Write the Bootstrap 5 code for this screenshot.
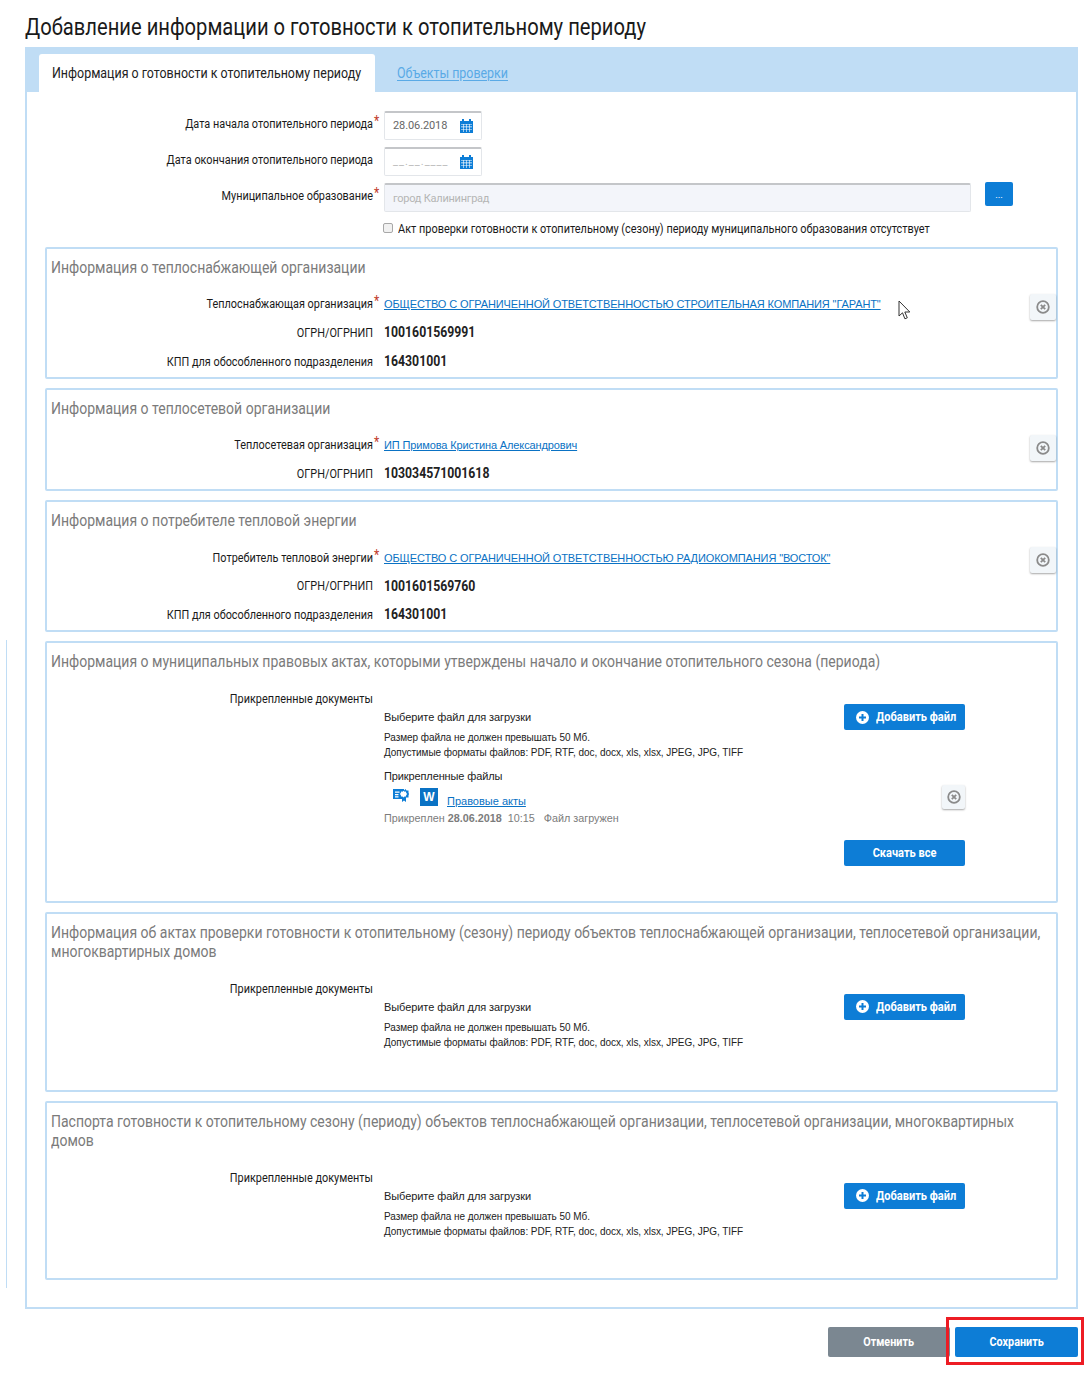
<!doctype html>
<html lang="ru">
<head>
<meta charset="utf-8">
<title>Добавление информации</title>
<link href="https://cdn.jsdelivr.net/npm/bootstrap@5.3.0/dist/css/bootstrap.min.css" rel="stylesheet">
<style>
body{background:#fff;color:#1a1a1a;font-family:"Liberation Sans",sans-serif;position:relative;height:1390px;overflow:hidden}
.page-wrap{width:1053px;margin-left:25px}
.page-title{font:400 23px/26px Roboto,sans-serif;margin:15px 0 6px;color:#1a1a1a;white-space:nowrap;transform:scaleX(.877);transform-origin:0 50%}
.outer-box{border:2px solid #c0ddf5;border-top:0;height:1262px}
.tab-strip{background:#c0ddf5;height:45px;margin:0 -2px;padding:7px 0 0 14px;align-items:stretch}
.tab-on{background:#fff;width:336px;border-radius:3px 3px 0 0;color:#222;white-space:nowrap;padding-left:13px;overflow:hidden}
.tab-text{display:inline-block;font:14px/38px Roboto,sans-serif;transform:scaleX(.888);transform-origin:0 50%;white-space:nowrap}
.tab-off{margin-left:22px;color:#5aaae6;text-decoration:underline;text-underline-offset:2px}
.form-body{padding:15px 18px 0 18px}
.field-row{height:36px;align-items:center}
.lab{flex:0 0 auto;width:339px;padding-right:4.6px;text-align:right;font:12.5px/18px Roboto,sans-serif;color:#1a1a1a;white-space:nowrap;transform:scaleX(.87);transform-origin:100% 50%}
.field-row .lab{margin-top:-2px}
.star{display:inline-block;width:8px;color:#c0392b;font-size:14px;line-height:12px;text-align:center;vertical-align:2px}
.star-off{visibility:hidden}
.date-box{width:98px;height:29px;border:1px solid #e3e6ea;border-top:2px solid #c4c6c9;border-radius:2px;padding:1px 8px 0 8px;font:11px/26px Roboto,sans-serif;color:#666;letter-spacing:-.1px}
.date-blank{color:#bbb;letter-spacing:1px}
.muni-box{width:587px;height:29px;background:#f3f5fa;border:1px solid #e3e6ea;border-top:2px solid #c4c6c9;border-radius:2px;padding:0 8px;font:11px/28px Roboto,sans-serif;color:#b5b5b5;letter-spacing:-.25px}
.dots-btn{width:28px;height:24px;background:#0d7dd6;border:0;border-radius:2px;color:#fff;font-size:9px;line-height:26px;padding:0;margin-left:14px;margin-top:-6px}
.chk-row{height:26px;margin-left:338px;margin-top:2px;align-items:center;white-space:nowrap}
.chk-text{display:inline-block;font:12.5px/18px Roboto,sans-serif;transform:scaleX(.874);transform-origin:0 50%;margin-top:-3px}
.chk-box{margin:0 5px 4px 0;width:10px;height:10px;border:1px solid #a8a8a8;border-radius:2px;background:#f1f1f1;flex:none}
.info-box{border:2px solid #c0ddf5;border-radius:2px;margin-bottom:9px;position:relative;padding:10px 0 1px 4px}
.info-first{margin-top:4px}
.info-title{font:400 16px/18.5px Roboto,sans-serif;color:#7b7b7b;margin:0 0 12.5px;width:calc((100% - 10px)/.875);transform:scaleX(.875);transform-origin:0 50%}
.pair-row{height:28.67px;align-items:center}
.pair-row .lab{width:333px}
.val{font:700 14px/18px Roboto,sans-serif;color:#222;transform:scaleX(.875);transform-origin:0 50%;margin-top:-1px}
.org-link{font:11px/18px "Liberation Sans",Arial,sans-serif;letter-spacing:-.12px;color:#0a72c4;text-decoration:underline;white-space:nowrap}
.x-btn{width:26px;height:26px;background:#f2f6f9;border-radius:2px;box-shadow:0 1px 2px rgba(0,0,0,.35);align-items:center;justify-content:center;padding:0;border:0;flex:none}
.pair-row .x-btn{margin-left:auto;margin-top:5px}
.doc-row{margin-top:18.5px}
.doc-row .lab{width:333px}
.doc-main{width:581px;padding-top:14px}
.head-line{justify-content:space-between;align-items:flex-start}
.pick-title{font:11px/18px "Liberation Sans",Arial,sans-serif;letter-spacing:-.08px;margin-top:4px;color:#222}
.pick-note{font:10px/15px "Liberation Sans",Arial,sans-serif;letter-spacing:-.05px;color:#222;margin-top:4px}
.act-btn{width:121px;height:26px;background:#0d7dd6;border:0;border-radius:2px;color:#fff;padding:0 0 0 12px;align-items:center;justify-content:flex-start;gap:7px;flex:none;overflow:hidden}
.act-btn svg{flex:none}
.act-text{display:inline-block;font:700 13px/26px Roboto,sans-serif;color:#fff;white-space:nowrap;transform:scaleX(.85);transform-origin:0 50%}
.act-center{padding:0;justify-content:center}
.act-center .act-text{transform-origin:50% 50%}
.att-title{font:11px/18px "Liberation Sans",Arial,sans-serif;letter-spacing:-.12px;color:#222;margin-top:7px}
.att-line{height:24px;align-items:center;padding-left:9px}
.cert-mark{flex:none;margin-top:-3px}
.w-tile{width:18px;height:18px;background:#0a72c4;color:#fff;font:700 12px/18px "Liberation Sans",sans-serif;text-align:center;margin-left:11px;flex:none}
.file-link{margin-left:9px;font:11px/18px "Liberation Sans",Arial,sans-serif;color:#0a72c4;text-decoration:underline;margin-top:8px}
.att-line .x-btn{margin-left:auto;width:23px;height:24px}
.att-meta{font:10.8px/14px "Liberation Sans",Arial,sans-serif;color:#7c7c7c;margin-top:2px}
.dl-line{justify-content:flex-end;margin-top:15px}
.pad-dl{padding-bottom:35px}
.pad-end{padding-bottom:40.5px}
.pad-last{padding-bottom:39.5px}
.foot-row{justify-content:flex-end;gap:5px;margin-top:18px;position:relative}
.foot-btn{width:122px;height:30px;border:0;border-radius:2px;color:#fff;padding:0}
.foot-text{display:inline-block;font:700 13px/30px Roboto,sans-serif;color:#fff;transform:scaleX(.83);white-space:nowrap}
.foot-gray{background:#7b8791}
.foot-blue{background:#0d7dd6;width:123px}
.red-frame{position:absolute;left:921px;top:-10px;width:138px;height:48px;border:3px solid #ed1c24;pointer-events:none}
.cursor-mark{position:absolute;left:851px;top:51px}
.side-rule{position:absolute;left:6px;top:640px;width:1px;height:648px;background:#c0ddf5}
</style>
</head>
<body>
<div class="side-rule"></div>
<div class="page-wrap">
  <h1 class="page-title">Добавление информации о готовности к отопительному периоду</h1>
  <div class="outer-box">
    <div class="tab-strip d-flex">
      <div class="tab-on"><span class="tab-text">Информация о готовности к отопительному периоду</span></div>
      <a class="tab-text tab-off" href="#">Объекты проверки</a>
    </div>
    <div class="form-body">
      <div class="field-row d-flex">
        <div class="lab">Дата начала отопительного периода<span class="star">*</span></div>
        <div class="date-box d-flex justify-content-between align-items-center"><span>28.06.2018</span>
          <svg width="13" height="14" viewBox="0 0 13 14"><path fill="#0d7dd6" d="M0 2h2V0h2v2h5V0h2v2h2v12H0z"/><path fill="#fff" d="M1 5h11v.6H1zM1 7.6h11v.6H1zM1 10.2h11v.6H1zM3.4 5.6H4V13h-.6zM6.2 5.6h.6V13h-.6zM9 5.6h.6V13H9z"/></svg></div>
      </div>
      <div class="field-row d-flex">
        <div class="lab">Дата окончания отопительного периода<span class="star star-off">*</span></div>
        <div class="date-box d-flex justify-content-between align-items-center"><span class="date-blank">__.__.____</span>
          <svg width="13" height="14" viewBox="0 0 13 14"><path fill="#0d7dd6" d="M0 2h2V0h2v2h5V0h2v2h2v12H0z"/><path fill="#fff" d="M1 5h11v.6H1zM1 7.6h11v.6H1zM1 10.2h11v.6H1zM3.4 5.6H4V13h-.6zM6.2 5.6h.6V13h-.6zM9 5.6h.6V13H9z"/></svg></div>
      </div>
      <div class="field-row d-flex">
        <div class="lab">Муниципальное образование<span class="star">*</span></div>
        <div class="muni-box">город Калининград</div>
        <button class="btn dots-btn" type="button">...</button>
      </div>
      <div class="chk-row d-flex"><span class="chk-box"></span><span class="chk-text">Акт проверки готовности к отопительному (сезону) периоду муниципального образования отсутствует</span></div>

      <div class="info-box info-first">
        <h2 class="info-title">Информация о теплоснабжающей организации</h2>
        <div class="pair-row d-flex">
          <div class="lab">Теплоснабжающая организация<span class="star">*</span></div>
          <a class="org-link" href="#">ОБЩЕСТВО С ОГРАНИЧЕННОЙ ОТВЕТСТВЕННОСТЬЮ СТРОИТЕЛЬНАЯ КОМПАНИЯ "ГАРАНТ"</a>
          <button class="x-btn d-flex" type="button"><svg width="14" height="14" viewBox="0 0 14 14"><circle cx="7" cy="7" r="5.8" fill="none" stroke="#8b8b8b" stroke-width="1.8"/><path d="M4.8 4.8l4.4 4.4M9.2 4.8l-4.4 4.4" stroke="#8b8b8b" stroke-width="1.8"/></svg></button>
        </div>
        <div class="pair-row d-flex"><div class="lab">ОГРН/ОГРНИП<span class="star star-off">*</span></div><span class="val">1001601569991</span></div>
        <div class="pair-row d-flex"><div class="lab">КПП для обособленного подразделения<span class="star star-off">*</span></div><span class="val">164301001</span></div>
        <svg class="cursor-mark" width="13" height="20" viewBox="0 0 13 20"><path d="M1 1v15l3.5-3.2 2.4 6 2.4-1-2.5-5.8h5z" fill="#fff" stroke="#333" stroke-width="1"/></svg>
      </div>

      <div class="info-box">
        <h2 class="info-title">Информация о теплосетевой организации</h2>
        <div class="pair-row d-flex">
          <div class="lab">Теплосетевая организация<span class="star">*</span></div>
          <a class="org-link" href="#">ИП Примова Кристина Александрович</a>
          <button class="x-btn d-flex" type="button"><svg width="14" height="14" viewBox="0 0 14 14"><circle cx="7" cy="7" r="5.8" fill="none" stroke="#8b8b8b" stroke-width="1.8"/><path d="M4.8 4.8l4.4 4.4M9.2 4.8l-4.4 4.4" stroke="#8b8b8b" stroke-width="1.8"/></svg></button>
        </div>
        <div class="pair-row d-flex"><div class="lab">ОГРН/ОГРНИП<span class="star star-off">*</span></div><span class="val">103034571001618</span></div>
      </div>

      <div class="info-box">
        <h2 class="info-title">Информация о потребителе тепловой энергии</h2>
        <div class="pair-row d-flex">
          <div class="lab">Потребитель тепловой энергии<span class="star">*</span></div>
          <a class="org-link" href="#">ОБЩЕСТВО С ОГРАНИЧЕННОЙ ОТВЕТСТВЕННОСТЬЮ РАДИОКОМПАНИЯ "ВОСТОК"</a>
          <button class="x-btn d-flex" type="button"><svg width="14" height="14" viewBox="0 0 14 14"><circle cx="7" cy="7" r="5.8" fill="none" stroke="#8b8b8b" stroke-width="1.8"/><path d="M4.8 4.8l4.4 4.4M9.2 4.8l-4.4 4.4" stroke="#8b8b8b" stroke-width="1.8"/></svg></button>
        </div>
        <div class="pair-row d-flex"><div class="lab">ОГРН/ОГРНИП<span class="star star-off">*</span></div><span class="val">1001601569760</span></div>
        <div class="pair-row d-flex"><div class="lab">КПП для обособленного подразделения<span class="star star-off">*</span></div><span class="val">164301001</span></div>
      </div>

      <div class="info-box pad-dl">
        <h2 class="info-title">Информация о муниципальных правовых актах, которыми утверждены начало и окончание отопительного сезона (периода)</h2>
        <div class="doc-row d-flex">
          <div class="lab">Прикрепленные документы<span class="star star-off">*</span></div>
          <div class="doc-main">
            <div class="head-line d-flex">
              <div><div class="pick-title">Выберите файл для загрузки</div><div class="pick-note">Размер файла не должен превышать 50 Мб.<br>Допустимые форматы файлов: PDF, RTF, doc, docx, xls, xlsx, JPEG, JPG, TIFF</div></div>
              <button class="btn act-btn d-flex" type="button"><svg width="13" height="13" viewBox="0 0 13 13"><circle cx="6.5" cy="6.5" r="6.5" fill="#fff"/><path d="M6.5 3v7M3 6.5h7" stroke="#0d7dd6" stroke-width="2"/></svg><span class="act-text">Добавить файл</span></button>
            </div>
            <div class="att-title">Прикрепленные файлы</div>
            <div class="att-line d-flex">
              <svg class="cert-mark" width="16" height="16" viewBox="0 0 16 16"><path fill="#0d7dd6" d="M0 1h11v1.5L12.5 1l1 1.5h2v2l.5 1.5-.5 1.5v2h-2.5v4.500l-2-1.500-2 1.500V11H0z"/><path fill="#fff" d="M2 3.500h4.500v1.200H2zM2 6h3.500v1.200H2zM2 8.300h3.500v1.200H2zM10.500 2.800l1 1 1.500-.2.200 1.500 1 1-1 1-.2 1.500-1.500-.2-1 1-1-1-1.500.2-.2-1.500-1-1 1-1 .2-1.500 1.500.2z"/></svg>
              <span class="w-tile">W</span><a class="file-link" href="#">Правовые акты</a>
              <button class="x-btn d-flex" type="button"><svg width="14" height="14" viewBox="0 0 14 14"><circle cx="7" cy="7" r="5.8" fill="none" stroke="#8b8b8b" stroke-width="1.8"/><path d="M4.8 4.8l4.4 4.4M9.2 4.8l-4.4 4.4" stroke="#8b8b8b" stroke-width="1.8"/></svg></button>
            </div>
            <div class="att-meta">Прикреплен <b>28.06.2018</b>&nbsp; 10:15 &nbsp; Файл загружен</div>
            <div class="dl-line d-flex"><button class="btn act-btn act-center d-flex" type="button"><span class="act-text">Скачать все</span></button></div>
          </div>
        </div>
      </div>

      <div class="info-box pad-end">
        <h2 class="info-title">Информация об актах проверки готовности к отопительному (сезону) периоду объектов теплоснабжающей организации, теплосетевой организации, многоквартирных домов</h2>
        <div class="doc-row d-flex">
          <div class="lab">Прикрепленные документы<span class="star star-off">*</span></div>
          <div class="doc-main">
            <div class="head-line d-flex">
              <div><div class="pick-title">Выберите файл для загрузки</div><div class="pick-note">Размер файла не должен превышать 50 Мб.<br>Допустимые форматы файлов: PDF, RTF, doc, docx, xls, xlsx, JPEG, JPG, TIFF</div></div>
              <button class="btn act-btn d-flex" type="button"><svg width="13" height="13" viewBox="0 0 13 13"><circle cx="6.5" cy="6.5" r="6.5" fill="#fff"/><path d="M6.5 3v7M3 6.5h7" stroke="#0d7dd6" stroke-width="2"/></svg><span class="act-text">Добавить файл</span></button>
            </div>
          </div>
        </div>
      </div>

      <div class="info-box pad-last">
        <h2 class="info-title">Паспорта готовности к отопительному сезону (периоду) объектов теплоснабжающей организации, теплосетевой организации, многоквартирных домов</h2>
        <div class="doc-row d-flex">
          <div class="lab">Прикрепленные документы<span class="star star-off">*</span></div>
          <div class="doc-main">
            <div class="head-line d-flex">
              <div><div class="pick-title">Выберите файл для загрузки</div><div class="pick-note">Размер файла не должен превышать 50 Мб.<br>Допустимые форматы файлов: PDF, RTF, doc, docx, xls, xlsx, JPEG, JPG, TIFF</div></div>
              <button class="btn act-btn d-flex" type="button"><svg width="13" height="13" viewBox="0 0 13 13"><circle cx="6.5" cy="6.5" r="6.5" fill="#fff"/><path d="M6.5 3v7M3 6.5h7" stroke="#0d7dd6" stroke-width="2"/></svg><span class="act-text">Добавить файл</span></button>
            </div>
          </div>
        </div>
      </div>
    </div>
  </div>
  <div class="foot-row d-flex">
    <button class="btn foot-btn foot-gray" type="button"><span class="foot-text">Отменить</span></button>
    <button class="btn foot-btn foot-blue" type="button"><span class="foot-text">Сохранить</span></button>
    <div class="red-frame"></div>
  </div>
</div>
<script src="https://cdn.jsdelivr.net/npm/bootstrap@5.3.0/dist/js/bootstrap.bundle.min.js"></script>
</body>
</html>
